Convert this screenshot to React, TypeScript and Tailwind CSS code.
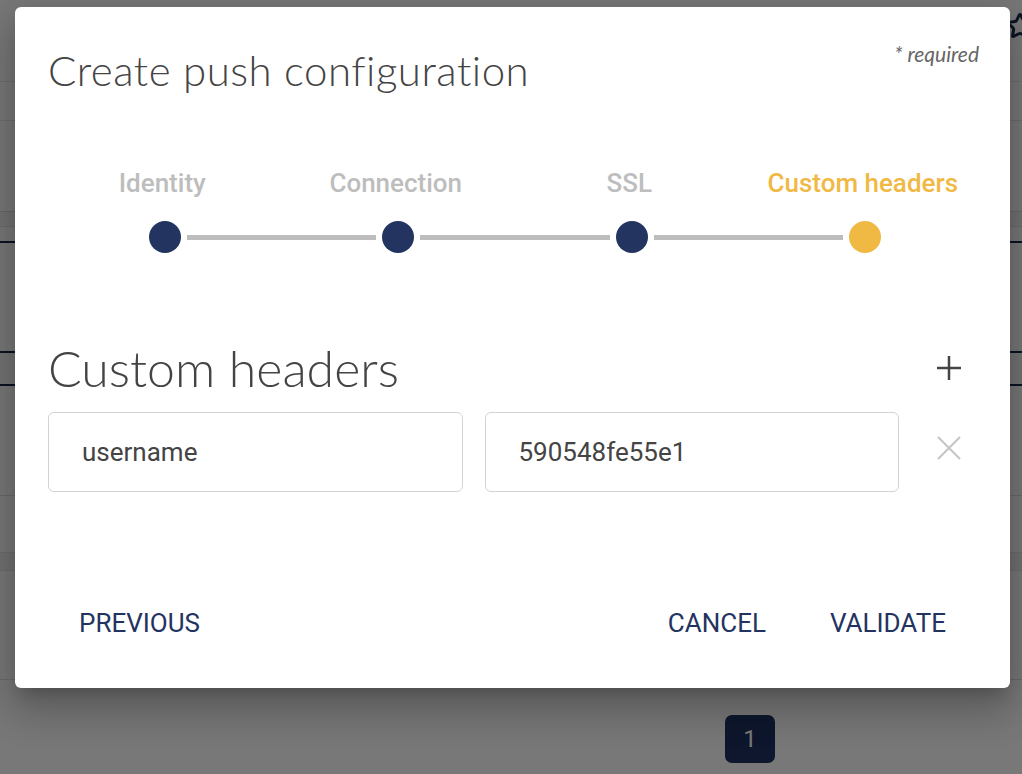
import React from 'react';
import { Star } from 'lucide-react';

const steps = ['Identity', 'Connection', 'SSL', 'Custom headers'];

const Stepper: React.FC<{ active: number }> = ({ active }) => {
  return (
    <div className="grid grid-cols-4 mt-[73px]">
      {steps.map((label, i) => {
        const isActive = i === active;
        return (
          <div key={label} className="flex flex-col items-center">
            <span
              className={`h-[32px] leading-[32px] text-[26px] font-medium -ml-[5px] ${isActive ? 'text-[#f0b944]' : 'text-[#bdbdbd]'}`}
            >
              {label}
            </span>
            <div className="flex items-center w-full h-[32px] mt-[22px]">
              <div className={`flex-1 h-[5px] mr-[6px] ${i === 0 ? '' : 'bg-[#bdbdbd]'}`} />
              <div className={`w-[32px] h-[32px] rounded-full ${isActive ? 'bg-[#f0b944]' : 'bg-[#22345f]'}`} />
              <div className={`flex-1 h-[5px] ml-[6px] ${i === steps.length - 1 ? '' : 'bg-[#bdbdbd]'}`} />
            </div>
          </div>
        );
      })}
    </div>
  );
};

const HeaderInput: React.FC<{ value: string }> = ({ value }) => (
  <div className="flex-1 h-[80px] border-[1.5px] border-[#cfd3d8] rounded-[6px] flex items-center pl-[33px] text-[26px] text-[#444]">
    {value}
  </div>
);

export default function App() {
  return (
    <div className="relative w-[1022px] h-[774px] overflow-hidden bg-white" style={{ fontFamily: 'Roboto, "Liberation Sans", sans-serif' }}>
      {/* page behind the dialog */}
      <div className="flex flex-col">
        <div className="h-[82px] border-b border-[#e8e8e8] relative">
          <Star className="absolute left-[1006px] top-[12px] w-[28px] h-[28px] text-[#1b2a4e]" strokeWidth={2.5} />
        </div>
        <div className="h-[39px] border-b border-[#e8e8e8]" />
        <div className="h-[91px] border-b border-[#dcdcdc]" />
        <div className="h-[15px] bg-[#f4f4f4] border-b border-[#e4e4e4]" />
        <div className="h-[16px] border-b-2 border-[#1b2a4e]" />
        <div className="h-[110px] border-b-2 border-[#1b2a4e]" />
        <div className="h-[33px] bg-[#f6f6f6] border-b-2 border-[#1b2a4e]" />
        <div className="h-[110px] border-b border-[#e0e0e0]" />
        <div className="h-[57px] border-b border-[#e8e8e8]" />
        <div className="h-[18px] bg-[#f3f3f3] border-b border-[#e4e4e4]" />
        <div className="h-[109px] border-b border-[#e4e4e4]" />
        <div className="flex-1 flex pl-[725px] pt-[35px]">
          <div className="w-[50px] h-[48px] rounded-[7px] bg-[#1e3160] text-white text-[24px] flex items-center justify-center">1</div>
        </div>
      </div>

      {/* backdrop */}
      <div className="absolute inset-0 bg-black/[0.53]" />

      {/* dialog */}
      <div className="absolute left-[15px] top-[7px] w-[995px] h-[681px] bg-white rounded-[6px] shadow-[0_11px_15px_-7px_rgba(0,0,0,0.2),0_24px_38px_3px_rgba(0,0,0,0.14),0_9px_46px_8px_rgba(0,0,0,0.12)] pl-[33px] pr-[28px] flex flex-col">
        <div className="flex justify-between items-start h-[87px]">
          <h2 className="mt-[39px] h-[48px] leading-[48px] text-[42px] tracking-[0.5px] font-light text-[#444]" style={{ fontFamily: 'Lato, "Open Sans", sans-serif' }}>
            Create push configuration
          </h2>
          <span className="mt-[35px] mr-[3px] leading-[24px] text-[21px] italic text-[#666]" style={{ fontFamily: 'Lato, "Open Sans", sans-serif' }}>
            * required
          </span>
        </div>

        <Stepper active={3} />

        <div className="flex items-center justify-between mt-[87px] h-[56px]">
          <h3 className="text-[50px] leading-[56px] font-light text-[#444]" style={{ fontFamily: 'Lato, "Open Sans", sans-serif' }}>
            Custom headers
          </h3>
          <button type="button" className="mr-[21px] w-[24px] h-[24px] flex items-center justify-center">
            <svg width="24" height="24" viewBox="0 0 24 24">
              <path d="M12 0v24M0 12h24" stroke="#444" strokeWidth="2.5" fill="none" />
            </svg>
          </button>
        </div>

        <div className="flex items-center gap-[22px] mt-[16px]">
          <HeaderInput value="username" />
          <HeaderInput value="590548fe55e1" />
          <div className="w-[61px] flex justify-end pr-[21px] -mt-[9px]">
            <svg width="24" height="24" viewBox="0 0 24 24">
              <path d="M1 1l22 22M23 1L1 23" stroke="#c4c4c4" strokeWidth="2" fill="none" />
            </svg>
          </div>
        </div>

        <div className="flex items-center justify-between mt-[103px] h-[56px] text-[26px] text-[#23335f]">
          <button type="button" className="px-[32px] -ml-[1px] h-[56px]">PREVIOUS</button>
          <div className="flex items-center mr-[4px]">
            <button type="button" className="px-[32px] h-[56px]">CANCEL</button>
            <button type="button" className="px-[32px] h-[56px]">VALIDATE</button>
          </div>
        </div>
      </div>
    </div>
  );
}
